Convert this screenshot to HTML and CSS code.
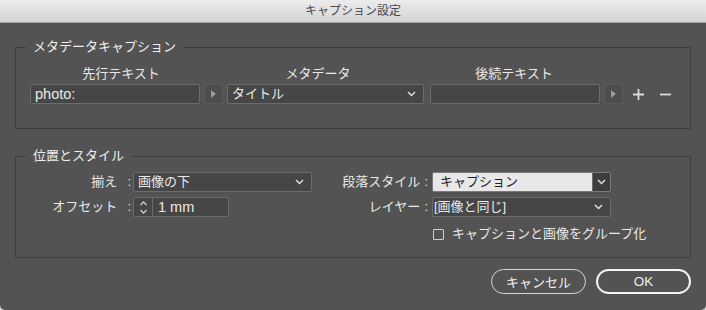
FILE: index.html
```html
<!DOCTYPE html>
<html lang="ja">
<head>
    <meta charset="UTF-8">
    <title>キャプション設定</title>
    <link rel="stylesheet" href="styles.css">
</head>
<body>
    <div class="dialog">
        <div class="titlebar">キャプション設定</div>

        <fieldset class="group group-meta">
            <legend>メタデータキャプション</legend>
            <div class="meta-body">
                <div class="meta-heads">
                    <span class="head head-before">先行テキスト</span>
                    <span class="head head-meta">メタデータ</span>
                    <span class="head head-after">後続テキスト</span>
                </div>
                <div class="meta-row">
                    <div class="field text-before">photo:</div>
                    <div class="arrow-btn">
                        <svg width="5" height="8" viewBox="0 0 5 8"><path d="M0 0 L5 4 L0 8 Z" fill="#9c9c9c"/></svg>
                    </div>
                    <div class="field select select-meta">
                        <span>タイトル</span>
                        <svg class="chev" width="9" height="6" viewBox="0 0 9 6"><path d="M1 1 L4.5 4.5 L8 1" fill="none" stroke="#dedede" stroke-width="1.5"/></svg>
                    </div>
                    <div class="field text-after"></div>
                    <div class="arrow-btn">
                        <svg width="5" height="8" viewBox="0 0 5 8"><path d="M0 0 L5 4 L0 8 Z" fill="#9c9c9c"/></svg>
                    </div>
                    <div class="icon-btn plus">
                        <svg width="11" height="11" viewBox="0 0 11 11"><path d="M5.5 0 V11 M0 5.5 H11" stroke="#dcdcdc" stroke-width="1.8"/></svg>
                    </div>
                    <div class="icon-btn minus">
                        <svg width="11" height="11" viewBox="0 0 11 11"><path d="M0 5.5 H11" stroke="#dcdcdc" stroke-width="1.8"/></svg>
                    </div>
                </div>
            </div>
        </fieldset>

        <fieldset class="group group-style">
            <legend>位置とスタイル</legend>
            <div class="style-grid">
                <label class="label label-left">揃え<span class="colon">:</span></label>
                <div class="field select">
                    <span>画像の下</span>
                    <svg class="chev" width="9" height="6" viewBox="0 0 9 6"><path d="M1 1 L4.5 4.5 L8 1" fill="none" stroke="#dedede" stroke-width="1.5"/></svg>
                </div>
                <label class="label label-right">段落スタイル<span class="colon">:</span></label>
                <div class="field select-light">
                    <span class="light-value">キャプション</span>
                    <span class="light-drop">
                        <svg width="9" height="6" viewBox="0 0 9 6"><path d="M1 1 L4.5 4.5 L8 1" fill="none" stroke="#dedede" stroke-width="1.5"/></svg>
                    </span>
                </div>

                <label class="label label-left">オフセット<span class="colon">:</span></label>
                <div class="field spinner">
                    <span class="spin-arrows">
                        <svg width="9" height="15" viewBox="0 0 9 15"><path d="M1.5 5 L4.5 2 L7.5 5 M1.5 10 L4.5 13 L7.5 10" fill="none" stroke="#cfcfcf" stroke-width="1.3"/></svg>
                    </span>
                    <span class="spin-value">1 mm</span>
                </div>
                <label class="label label-right">レイヤー<span class="colon">:</span></label>
                <div class="field select select-layer">
                    <span>[画像と同じ]</span>
                    <svg class="chev" width="9" height="6" viewBox="0 0 9 6"><path d="M1 1 L4.5 4.5 L8 1" fill="none" stroke="#dedede" stroke-width="1.5"/></svg>
                </div>

                <div class="check-row">
                    <span class="checkbox"></span>
                    <span>キャプションと画像をグループ化</span>
                </div>
            </div>
        </fieldset>

        <div class="actions">
            <div class="btn btn-cancel">キャンセル</div>
            <div class="btn btn-ok">OK</div>
        </div>
    </div>
</body>
</html>
```

FILE: styles.css
```css
:root {
    --panel-bg: #535353;
    --field-bg: #464646;
    --field-border: #6c6c6c;
    --group-border: #3f3f3f;
    --text-color: #e9e9e9;
}

* {
    margin: 0;
    padding: 0;
    box-sizing: border-box;
}

html {
    background: #d9d9d9;
}

body {
    font-family: "Liberation Sans", "Noto Sans CJK JP", sans-serif;
    font-size: 13px;
    color: var(--text-color);
}

.dialog {
    width: 706px;
    height: 310px;
    background: var(--panel-bg);
    border-radius: 0 0 5px 5px;
    overflow: hidden;
}

.titlebar {
    height: 23px;
    line-height: 22px;
    background: linear-gradient(#ececec, #d4d4d4);
    border-bottom: 1px solid #a8a8a8;
    color: #4a4a4a;
    font-size: 12px;
    text-align: center;
}

/* group boxes */
.group {
    border: 1px solid var(--group-border);
    margin: 16px 15px 0;
    padding: 0;
    min-width: 0;
}

.group legend {
    margin-left: 10px;
    padding: 0 7px;
    line-height: 16px;
    color: #efefef;
}

.group-style {
    margin-top: 19px;
}

/* metadata caption */
.meta-body {
    padding: 11px 0 24px 14px;
}

.meta-heads {
    display: flex;
    line-height: 16px;
}

.head {
    text-align: center;
}

.head-before { width: 182px; }
.head-meta { width: 212px; }
.head-after { width: 180px; }

.meta-row {
    display: flex;
    align-items: center;
    margin-top: 2px;
    height: 20px;
}

.field {
    height: 20px;
    line-height: 18px;
    background: var(--field-bg);
    border: 1px solid var(--field-border);
    border-radius: 2px;
    white-space: nowrap;
}

.text-before {
    width: 170px;
    padding-left: 4px;
    font-size: 14.5px;
}

.text-after {
    width: 170px;
    margin-left: 6px;
}

.arrow-btn {
    width: 19px;
    height: 20px;
    margin-left: 4px;
    background: #4d4d4d;
    border: 1px solid #5b5b5b;
    display: flex;
    align-items: center;
    justify-content: center;
}

.select {
    display: flex;
    align-items: center;
    justify-content: space-between;
    padding: 0 7px 0 4px;
}

.select-meta {
    width: 197px;
    margin-left: 4px;
}

.icon-btn {
    display: flex;
    align-items: center;
}

.plus { margin-left: 10px; }
.minus { margin-left: 16px; }

/* position and style */
.style-grid {
    display: grid;
    grid-template-columns: 117px 179px 120px 179px;
    grid-template-rows: 20px 20px auto;
    row-gap: 5px;
    padding: 8px 0 15px;
}

.label {
    line-height: 20px;
    text-align: right;
    white-space: nowrap;
}

.label-left { padding-right: 2px; }
.label-right { padding-right: 4px; }

.label-left .colon { margin-left: 10px; }
.label-right .colon { margin-left: 4px; }

.select-light {
    display: flex;
    background: #e8e8e8;
    border-color: #7a7a7a;
    color: #1e1e1e;
}

.light-value {
    flex: 1;
    padding-left: 7px;
}

.light-drop {
    width: 18px;
    background: #3d3d3d;
    border-left: 1px solid #6c6c6c;
    display: flex;
    align-items: center;
    justify-content: center;
}

.spinner {
    display: flex;
    width: 96px;
}

.spin-arrows {
    width: 19px;
    border-right: 1px solid var(--field-border);
    display: flex;
    align-items: center;
    justify-content: center;
}

.spin-value {
    padding-left: 5px;
    font-size: 14.5px;
}

.select-layer {
    padding-left: 1px;
}

.check-row {
    grid-column: 4;
    display: flex;
    align-items: center;
    gap: 8px;
    margin-top: 4px;
    line-height: 16px;
    white-space: nowrap;
}

.checkbox {
    flex-shrink: 0;
    width: 11px;
    height: 11px;
    margin-left: 1px;
    border: 1px solid #cfcfcf;
    border-radius: 1px;
}

/* buttons */
.actions {
    display: flex;
    justify-content: flex-end;
    gap: 10px;
    margin-top: 11px;
    padding-right: 15px;
}

.btn {
    width: 95px;
    height: 25px;
    border-radius: 13px;
    display: flex;
    align-items: center;
    justify-content: center;
    color: #f0f0f0;
}

.btn-cancel {
    border: 1.5px solid #d6d6d6;
}

.btn-ok {
    border: 2px solid #f4f4f4;
    font-size: 13.5px;
}
```
